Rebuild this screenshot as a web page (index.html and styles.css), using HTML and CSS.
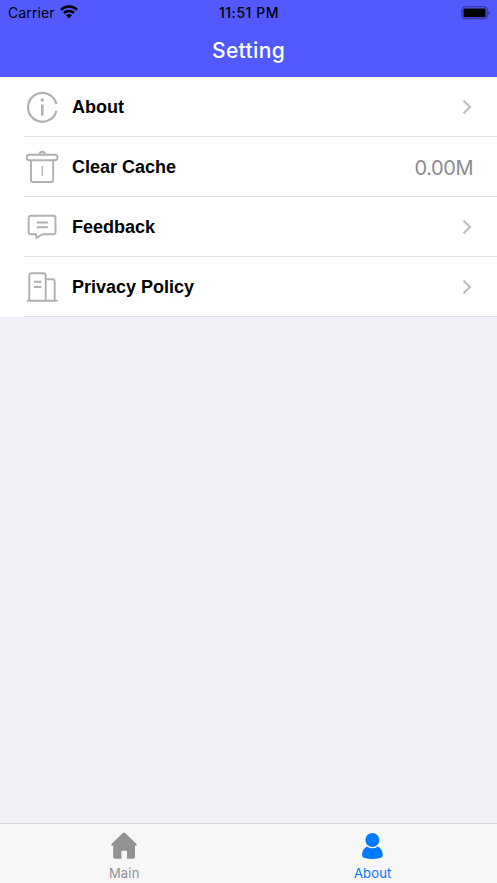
FILE: index.html
```html
<!DOCTYPE html>
<html lang="en">
<head>
<meta charset="utf-8">
<title>Setting</title>
<link rel="stylesheet" href="styles.css">
</head>
<body>
<div class="screen">
  <header class="header">
    <div class="status">
      <div class="carrier"><span>Carrier</span>
        <svg class="wifi" width="18" height="14" viewBox="0 0 18 14" fill="none" stroke="#000"><path d="M.9 4.8C5.4.5 12.600.5 17.100 4.800M3.900 8C6.800 5.300 11.200 5.300 14.100 8" stroke-width="2.500"/><path d="M6 10.300Q9 7.800 12 10.300L9 13.400Z" fill="#000" stroke="none"/></svg>
      </div>
      <div class="time">11:51 PM</div>
      <div class="power">
        <svg width="30" height="14" viewBox="0 0 30 14"><rect x=".9" y=".8" width="25.200" height="12" rx="3.500" fill="none" stroke="#000" stroke-opacity=".45" stroke-width="1.100"/><rect x="2.500" y="2.400" width="22" height="8.800" rx="1.200"/><path d="M27.500 4.700Q30 6.800 27.500 8.900Z" fill-opacity=".5"/></svg>
      </div>
    </div>
    <h1 class="title">Setting</h1>
  </header>
  <main class="list">
    <div class="row">
      <svg class="icon" viewBox="0 0 36 36"><path d="M32.400 15A14.400 14.400 0 1 0 32.400 21.700" stroke-width="2.200"/><path d="M18.300 15.500v11.200" stroke-width="2.600"/><circle class="dot" cx="18.300" cy="11" r="1.700"/></svg>
      <span class="label">About</span>
      <svg class="chevron" viewBox="0 0 10 16"><path d="M1.500 1.700L8 8L1.500 14.300"/></svg>
    </div>
    <div class="row">
      <svg class="icon" viewBox="0 0 36 36"><path d="M15.500 5.500a2.700 2.700 0 0 1 5.400 0"/><rect x="2.700" y="5.800" width="30.800" height="5.400" rx="2.700"/><path d="M7 11.200v19.900q0 1.900 1.900 1.900h18.400q1.900 0 1.900-1.900V11.200"/><path d="M18.300 17v10" stroke-width="1.300"/></svg>
      <span class="label">Clear Cache</span>
      <span class="value">0.00M</span>
    </div>
    <div class="row">
      <svg class="icon" viewBox="0 0 36 36"><path d="M7 6.700h22.200q2.300 0 2.300 2.300v14q0 2.300-2.300 2.300H18.500L12.500 28.900L12 25.300H7Q4.700 25.300 4.700 23V9Q4.700 6.700 7 6.700Z"/><path d="M12.800 13.500h11M12.800 18.200h11"/></svg>
      <span class="label">Feedback</span>
      <svg class="chevron" viewBox="0 0 10 16"><path d="M1.500 1.700L8 8L1.500 14.300"/></svg>
    </div>
    <div class="row">
      <svg class="icon" viewBox="0 0 36 36"><path d="M5.300 31.500V6.500q0-2.300 2.300-2.300h11.800q2.300 0 2.300 2.300v25M21.700 10.300h6.600q2.400 0 2.400 2.400v18.800M3 31.800h30.600"/><path d="M10 12.800h7.400M10 18h7.400" stroke-width="1.900"/></svg>
      <span class="label">Privacy Policy</span>
      <svg class="chevron" viewBox="0 0 10 16"><path d="M1.500 1.700L8 8L1.500 14.300"/></svg>
    </div>
  </main>
  <nav class="tabs">
    <div class="tab">
      <svg width="28" height="28" viewBox="0 0 28 28"><path d="M12.900 1.100Q14 .1 15.100 1.100L26.500 12Q27.500 13.500 25.700 13.700H25V24.900Q25 26.700 23.200 26.700H17V20.100Q17 18.700 15.600 18.700H12.800Q11.400 18.700 11.400 20.100V26.700H5Q3.200 26.700 3.200 24.900V13.700H2.300Q.5 13.500 1.500 12Z"/></svg>
      <span>Main</span>
    </div>
    <div class="tab active">
      <svg width="28" height="28" viewBox="0 0 28 28"><circle cx="13.400" cy="8" r="7"/><path d="M7.900 14.400Q13.400 18.100 18.900 14.400C22.400 16.400 23.800 19.800 23.800 23Q23.800 25 21.800 25.700Q13.400 28.200 5 25.700Q3 25 3 23C3 19.800 4.400 16.400 7.900 14.400Z"/></svg>
      <span>About</span>
    </div>
  </nav>
</div>
</body>
</html>
```
FILE: styles.css
```css
* { box-sizing: border-box; }
body { margin: 0; font-family: Inter, sans-serif; }
.screen { height: 883px; display: flex; flex-direction: column; background: #f2f1f7; overflow: hidden; }
.header { height: 77px; background: #525aff; }
.status { height: 26px; padding: 0 7px 0 8px; display: grid; grid-template-columns: 1fr auto 1fr; align-items: center; font-size: 14px; line-height: 26px; color: #000; }
.carrier { display: flex; align-items: center; gap: 5px; letter-spacing: .1px; }
.wifi { margin-top: -2px; }
.time { font-weight: 500; font-size: 14px; letter-spacing: .55px; }
.power { display: flex; justify-content: flex-end; margin: -1px -1px 0 0; }
.title { margin: 0; font-size: 21px; line-height: 50px; font-weight: 500; letter-spacing: .35px; text-align: center; color: #fff; }
.list { background: #fff; padding-left: 24px; }
.row { height: 60px; display: flex; align-items: center; border-bottom: 1px solid #e2e2e4; padding-right: 24px; }
.icon { width: 36px; height: 36px; flex: none; fill: none; stroke: #b0b0b0; stroke-width: 1.900; stroke-linejoin: round; }
.icon .dot { fill: #b0b0b0; stroke: none; }
.label { margin-left: 12px; flex: 1; font: bold 18px/24px "Liberation Sans", sans-serif; color: #000; }
.chevron { width: 10px; height: 16px; margin-right: 1px; fill: none; stroke: #c2c2c4; stroke-width: 2.300; }
.value { margin-top: 2px; font-size: 20px; font-weight: 400; letter-spacing: -.45px; color: #8a8a8e; }
.tabs { height: 60px; margin-top: auto; display: flex; background: #f7f7f7; border-top: 1px solid #d6d6d8; }
.tab { flex: 1; display: flex; flex-direction: column; align-items: center; padding-top: 8px; color: #929292; fill: currentColor; font-size: 13px; line-height: 16px; letter-spacing: .2px; }
.tab span { margin-top: 5px; }
.active { color: #007aff; }
```
